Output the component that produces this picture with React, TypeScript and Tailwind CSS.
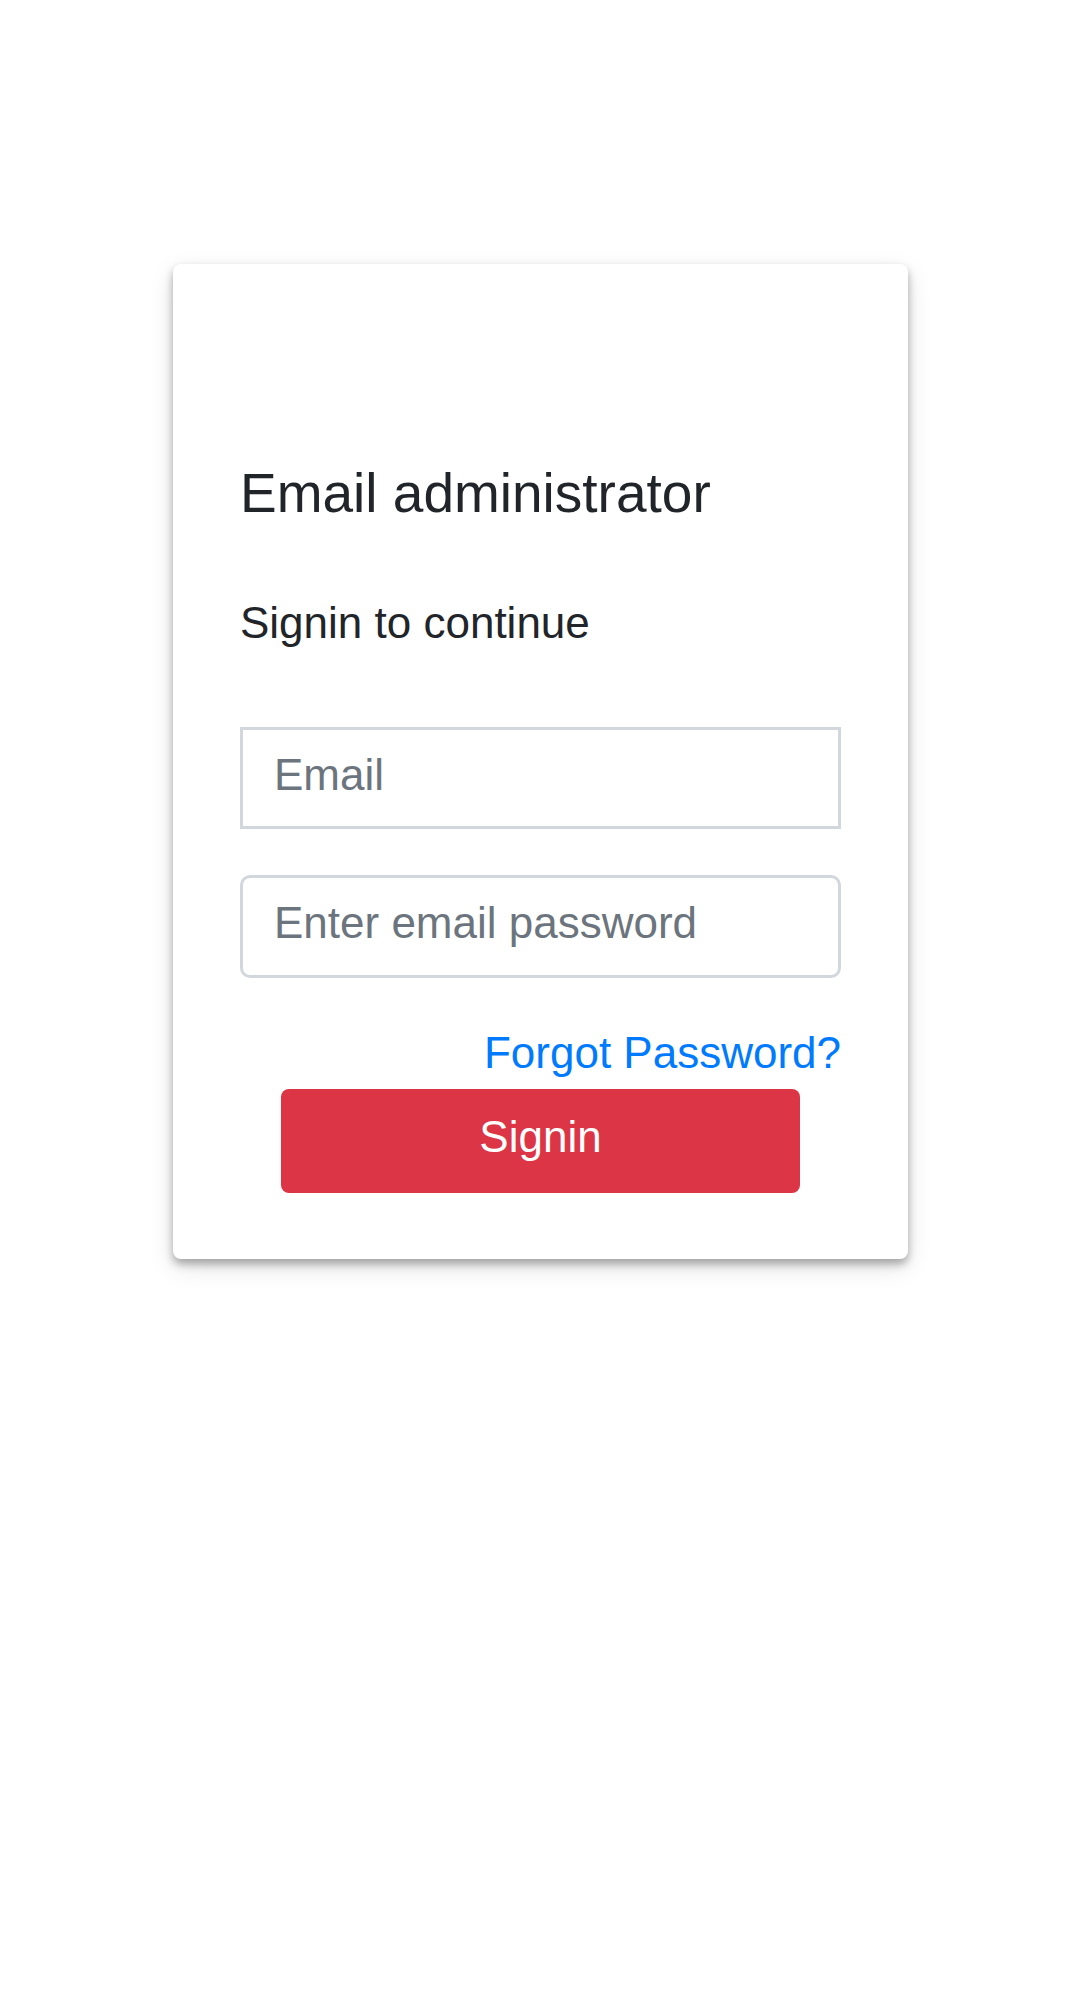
import { useState } from 'react';

export default function App() {
  const [email, setEmail] = useState('');
  const [password, setPassword] = useState('');

  return (
    <div className="min-h-screen bg-white pt-[264px] font-['Liberation_Sans',Arial,sans-serif] text-[#212529]">
      {/* Card */}
      <div className="mx-auto w-[735px] rounded-lg bg-white px-[67px] pt-[197px] pb-[66px] shadow-[0_5px_9px_rgba(0,0,0,0.3),0_8px_24px_rgba(0,0,0,0.12)]">
        <h5 className="text-[55px] leading-[65px] font-normal">Email administrator</h5>

        <p className="mt-[65px] text-[44px] leading-[64.5px]">Signin to continue</p>

        <input
          type="email"
          value={email}
          onChange={(e) => setEmail(e.target.value)}
          placeholder="Email"
          className="mt-[71px] block h-[102px] w-full rounded-none border-[3px] border-[#d2d7dd] bg-white pl-[31px] pr-4 pb-[6px] text-[44px] text-[#495057] outline-none placeholder:text-[#6c757d]"
        />

        <input
          type="password"
          value={password}
          onChange={(e) => setPassword(e.target.value)}
          placeholder="Enter email password"
          className="mt-[46px] block h-[103px] w-full rounded-[10px] border-[3px] border-[#d2d7dd] bg-white pl-[31px] pr-4 pb-[6px] text-[44px] text-[#495057] outline-none placeholder:text-[#6c757d]"
        />

        <div className="mt-[43px] text-right text-[44px] leading-[64.5px]">
          <a href="#" className="text-[#007bff]">
            Forgot Password?
          </a>
        </div>

        <button
          type="button"
          className="mx-auto mt-[4px] flex h-[104px] w-[519px] items-center justify-center rounded-[8px] bg-[#dc3545] pb-[8px] text-[44px] text-white"
        >
          Signin
        </button>
      </div>
    </div>
  );
}
